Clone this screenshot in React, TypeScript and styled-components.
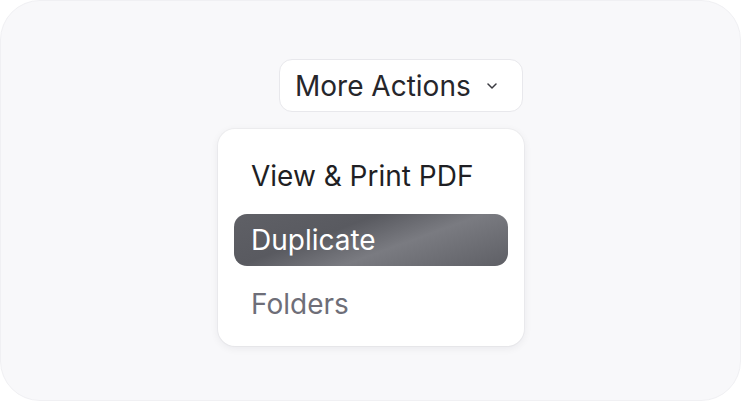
import React from "react";
import styled, { createGlobalStyle } from "styled-components";

const Global = createGlobalStyle`
  html, body { margin: 0; padding: 0; background: #ffffff; }
  body { font-family: Inter, "Noto Sans", sans-serif; -webkit-font-smoothing: antialiased; }
`;

const Frame = styled.div`
  width: 741px;
  height: 401px;
  box-sizing: border-box;
  border-radius: 40px;
  background: #f8f8fa;
  border: 1px solid #f0f0f3;
  display: flex;
  flex-direction: column;
  align-items: flex-start;
  padding: 58px 0 0 217px;
`;

const Trigger = styled.button`
  margin-left: 61px;
  height: 53px;
  box-sizing: border-box;
  display: flex;
  align-items: center;
  gap: 16px;
  padding: 0 25px 0 15px;
  background: #ffffff;
  border: 1px solid #e8e8ec;
  border-radius: 13px;
  font-family: Inter, sans-serif;
  font-size: 28px;
  color: #26262b;
  cursor: pointer;
`;

const Menu = styled.div`
  margin-top: 17px;
  width: 306px;
  box-sizing: border-box;
  background: #ffffff;
  border-radius: 17px;
  box-shadow: 0 2px 8px rgba(20, 20, 40, 0.07), 0 0 0 1px rgba(20, 20, 40, 0.03);
  padding: 21px 16px 16px 16px;
  display: flex;
  flex-direction: column;
  gap: 12px;
`;

const Item = styled.div<{ $active?: boolean; $muted?: boolean }>`
  height: 52px;
  box-sizing: border-box;
  display: flex;
  align-items: center;
  padding: 0 17px;
  border-radius: 13px;
  font-size: 28px;
  color: ${(p) => (p.$active ? "#ffffff" : p.$muted ? "#6e6e78" : "#1f1f24")};
  background: ${(p) =>
    p.$active
      ? "linear-gradient(160deg, #5f6066 0%, #595a60 35%, #7a7b81 60%, #5e5f65 100%)"
      : "transparent"};
`;

const Chevron = () => (
  <svg width="10" height="8" viewBox="0 0 10 8" fill="none">
    <path d="M1 2L5 6L9 2" stroke="#3a3a40" strokeWidth="1.5" strokeLinecap="round" strokeLinejoin="round" />
  </svg>
);

export default function App() {
  return (
    <>
      <Global />
      <Frame>
        <Trigger>
          More Actions
          <Chevron />
        </Trigger>
        <Menu>
          <Item>View &amp; Print PDF</Item>
          <Item $active>Duplicate</Item>
          <Item $muted>Folders</Item>
        </Menu>
      </Frame>
    </>
  );
}
